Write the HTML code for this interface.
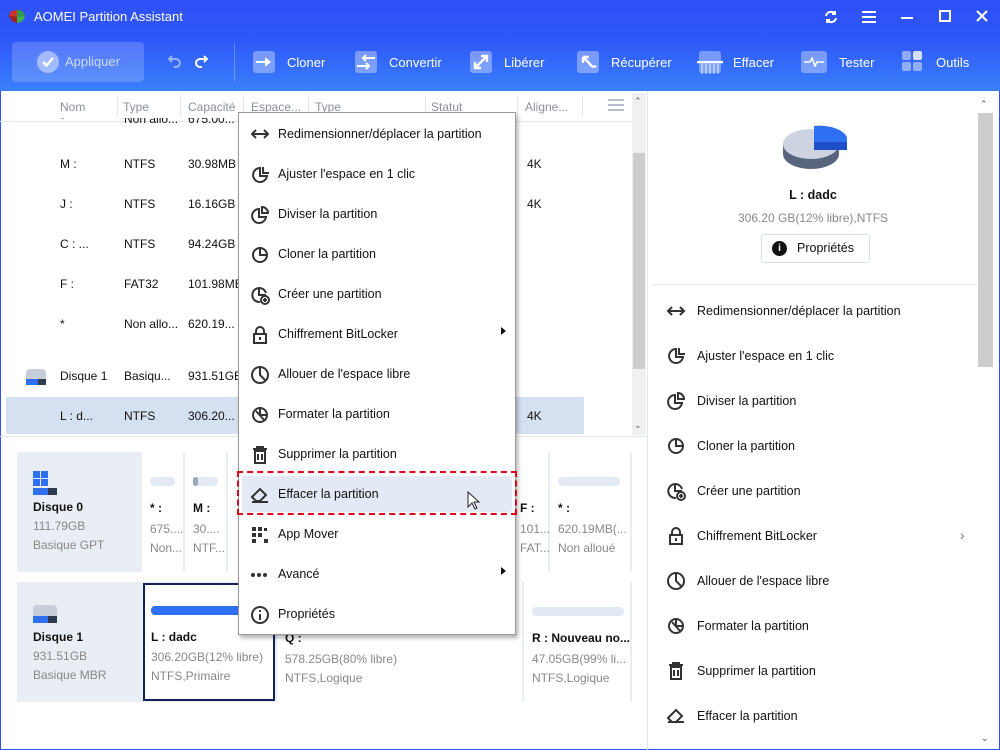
<!DOCTYPE html>
<html><head><meta charset="utf-8"><style>
*{box-sizing:border-box;margin:0;padding:0}
body{width:1000px;height:750px;overflow:hidden;font-family:"Liberation Sans","DejaVu Sans",sans-serif;font-size:12px;color:#111;background:#fff;position:relative}
.abs{position:absolute}
#top{left:0;top:0;width:1000px;height:91px;background:linear-gradient(#2d50f7 0%,#2f58f8 45%,#3a80fb 100%)}
.tb{position:absolute;top:48px;height:28px;color:#fff;font-size:13px;display:flex;align-items:center}
.tb .ic{width:22px;height:22px;border-radius:3px;background:rgba(255,255,255,.35);margin-right:12px;position:relative}
.hdr{position:absolute;top:100px;color:#8a8f99;font-size:12px}
.vs{position:absolute;top:95px;width:1px;height:22px;background:#e2e6ee}
.row{position:absolute;left:0;width:590px;height:20px;font-size:12px}
.row span{position:absolute}
.menu{left:238px;top:112px;width:278px;height:523px;background:#fff;border:1px solid #9a9a9a;box-shadow:2px 3px 4px rgba(0,0,0,.3)}
.mi{position:absolute;left:0;width:276px;height:40px;font-size:12.5px}
.mi svg{position:absolute;left:11px;top:11px}
.mi span{position:absolute;left:39px;top:13px}
.ri{position:absolute;left:660px;font-size:12.5px;width:320px;height:30px}
.ri svg{position:absolute;left:6px;top:5px}
.ri span{position:absolute;left:37px;top:8px}
.card{position:absolute;left:17px;width:615px;background:#e9edf4}
.pc{position:absolute;top:0;background:#fff;font-size:12px}
.pc .bar{position:absolute;left:8px;top:25px;height:9px;border-radius:4px;background:#e3e9f3}
.pc b{position:absolute;left:8px;top:49px;font-size:12px}
.pc .l1{position:absolute;left:8px;top:70px;color:#888}
.pc .l2{position:absolute;left:8px;top:89px;color:#888}
.gray{color:#888}
</style></head><body>
<div id="top" class="abs">
 <svg class="abs" style="left:8px;top:8px" width="18" height="16"><path d="M1 8 Q2 2 9 2 L9 9 Z" fill="#d2312c"/><path d="M9 2 Q16 2 17 8 L9 9Z" fill="#2f9a4a"/><path d="M1 8 L9 9 L9 15 Q3 14 1 8Z" fill="#a02020"/><path d="M9 9 L17 8 Q16 14 9 15Z" fill="#3bb04f"/></svg>
 <div class="abs" style="left:34px;top:9px;color:#fff;font-size:13px">AOMEI Partition Assistant</div>
 <svg class="abs" style="left:823px;top:9px" width="16" height="16" fill="none" stroke="#fff" stroke-width="2"><path d="M3 7a5 5 0 0 1 9-2M13 9a5 5 0 0 1-9 2"/><path d="M12 2v3h-3M4 14v-3h3"/></svg>
 <svg class="abs" style="left:862px;top:11px" width="14" height="12" stroke="#fff" stroke-width="2"><path d="M0 1h14M0 6h14M0 11h14"/></svg>
 <div class="abs" style="left:901px;top:17px;width:12px;height:2px;background:#fff"></div>
 <div class="abs" style="left:939px;top:10px;width:12px;height:12px;border:2px solid #fff"></div>
 <svg class="abs" style="left:976px;top:10px" width="12" height="12" stroke="#fff" stroke-width="2"><path d="M1 1L11 11M11 1L1 11"/></svg>
 <div class="abs" style="left:12px;top:42px;width:132px;height:40px;border-radius:4px;background:rgba(255,255,255,.18)"></div>
 <div class="abs" style="left:37px;top:51px;width:22px;height:22px;border-radius:11px;background:rgba(255,255,255,.45)"></div>
 <svg class="abs" style="left:41px;top:55px" width="14" height="14" fill="none" stroke="#fff" stroke-width="2.4"><path d="M2 7l3.5 3.5L12 3"/></svg>
 <div class="abs" style="left:65px;top:54px;color:rgba(255,255,255,.7);font-size:13px">Appliquer</div>
 <svg class="abs" style="left:168px;top:54px" width="40" height="14" fill="none" stroke-width="2"><path d="M4 2L1 5l3 3M1 5h7a4 4 0 0 1 0 8H6" stroke="rgba(255,255,255,.5)"/><path d="M36 2l3 3-3 3M39 5h-7a4 4 0 0 0 0 8h2" stroke="#fff"/></svg>
 <div class="abs" style="left:234px;top:42px;width:1px;height:40px;background:rgba(255,255,255,.25)"></div>
 <div class="tb" style="left:253px"><div class="ic"><svg class="abs" style="left:3px;top:5px" width="16" height="12" fill="#fff"><path d="M0 5h9V1l6 5-6 5V7H0z"/></svg></div>Cloner</div>
 <div class="tb" style="left:355px"><div class="ic"><svg class="abs" style="left:2px;top:2px" width="18" height="18" fill="none" stroke="#fff" stroke-width="2"><path d="M18 5H6M9 2L6 5l3 3M0 13h12M9 10l3 3-3 3"/></svg></div>Convertir</div>
 <div class="tb" style="left:470px"><div class="ic"><svg class="abs" style="left:2px;top:2px" width="18" height="18" fill="none" stroke="#fff" stroke-width="2.4"><path d="M3 15L15 3M9 3h6v6M3 9v6h6"/></svg></div>Libérer</div>
 <div class="tb" style="left:577px"><div class="ic"><svg class="abs" style="left:3px;top:3px" width="17" height="17" fill="none" stroke="#fff" stroke-width="2.4"><path d="M3 3l7 7a4 4 0 0 0 6 2M3 3v6M3 3h6"/></svg></div>Récupérer</div>
 <div class="tb" style="left:699px"><div class="ic"><svg class="abs" style="left:-2px;top:10px" width="26" height="14" stroke="#fff" stroke-width="1.4"><path d="M0 1h26" stroke-width="2.4"/><path d="M5 3v10M9 3v10M13 3v10M17 3v10M21 3v10" stroke="rgba(255,255,255,.6)"/></svg></div>Effacer</div>
 <div class="tb" style="left:801px"><div class="ic" style="width:26px"><svg class="abs" style="left:3px;top:6px" width="20" height="10" fill="none" stroke="#fff" stroke-width="1.6"><path d="M0 5h6l2-4 3 8 2-4h7"/></svg></div>Tester</div>
 <div class="tb" style="left:902px"><div class="ic" style="background:none"><div class="abs" style="left:0;top:0;width:9px;height:9px;border-radius:2px;background:rgba(255,255,255,.45)"></div><div class="abs" style="left:11px;top:0;width:9px;height:9px;border-radius:2px;background:rgba(255,255,255,.8)"></div><div class="abs" style="left:0;top:11px;width:9px;height:9px;border-radius:2px;background:rgba(255,255,255,.45)"></div><div class="abs" style="left:11px;top:11px;width:9px;height:9px;border-radius:2px;background:rgba(255,255,255,.45)"></div></div>Outils</div>
</div>
<div class="abs" style="left:0;top:91px;width:1px;height:659px;background:#2d50f7"></div>
<div class="abs" style="left:999px;top:91px;width:1px;height:659px;background:#2d50f7"></div>
<div class="abs" style="left:0;top:749px;width:1000px;height:1px;background:#2d50f7"></div>
<div class="hdr" style="left:60px">Nom</div><div class="vs" style="left:117px"></div>
<div class="hdr" style="left:123px">Type</div><div class="vs" style="left:180px"></div>
<div class="hdr" style="left:188px">Capacité</div><div class="vs" style="left:243px"></div>
<div class="hdr" style="left:251px">Espace...</div><div class="vs" style="left:308px"></div>
<div class="hdr" style="left:315px">Type</div><div class="vs" style="left:425px"></div>
<div class="hdr" style="left:431px">Statut</div><div class="vs" style="left:517px"></div>
<div class="hdr" style="left:525px">Aligne...</div><div class="vs" style="left:582px"></div>
<svg class="abs" style="left:608px;top:99px" width="16" height="12" fill="#b8bfcc"><rect width="16" height="2"/><rect y="5" width="16" height="2"/><rect y="10" width="16" height="2"/></svg>
<div class="abs" style="left:0;top:121px;width:632px;height:1px;background:#e2e6ee"></div>
<div class="abs" style="left:632px;top:93px;width:14px;height:342px;background:#f0f0f0"></div>
<div class="abs" style="left:633px;top:153px;width:12px;height:216px;background:#cdcdcd"></div>
<div class="abs" style="left:634px;top:96px;font-size:9px;color:#555">⌃</div>
<div class="abs" style="left:634px;top:420px;font-size:9px;color:#555">⌄</div>
<div class="row" style="top:118px;height:10px;overflow:hidden"><span style="left:60px;top:-6px">*</span><span style="left:124px;top:-6px">Non allo...</span><span style="left:188px;top:-6px">675.00...</span></div>
<div class="row" style="top:157px"><span style="left:60px">M :</span><span style="left:124px">NTFS</span><span style="left:188px">30.98MB</span><span style="left:527px">4K</span></div>
<div class="row" style="top:197px"><span style="left:60px">J :</span><span style="left:124px">NTFS</span><span style="left:188px">16.16GB</span><span style="left:527px">4K</span></div>
<div class="row" style="top:237px"><span style="left:60px">C : ...</span><span style="left:124px">NTFS</span><span style="left:188px">94.24GB</span></div>
<div class="row" style="top:277px"><span style="left:60px">F :</span><span style="left:124px">FAT32</span><span style="left:188px">101.98MB</span></div>
<div class="row" style="top:317px"><span style="left:60px">*</span><span style="left:124px">Non allo...</span><span style="left:188px">620.19...</span></div>
<div class="abs" style="left:26px;top:369px;width:20px;height:10px;border-radius:4px 4px 0 0;background:#c7ced9"></div>
<div class="abs" style="left:26px;top:379px;width:20px;height:6px;background:#2f3b4f"></div><div class="abs" style="left:26px;top:379px;width:12px;height:6px;background:#2f6ff2"></div>
<div class="row" style="top:369px"><span style="left:60px">Disque 1</span><span style="left:124px">Basiqu...</span><span style="left:188px">931.51GB</span></div>
<div class="abs" style="left:6px;top:397px;width:578px;height:37px;background:#d5e0f0"></div>
<div class="row" style="top:409px"><span style="left:60px">L : d...</span><span style="left:124px">NTFS</span><span style="left:188px">306.20...</span><span style="left:527px">4K</span></div>
<div class="abs" style="left:0;top:436px;width:648px;height:1px;background:#e2e6ee"></div>
<div class="abs" style="left:647px;top:91px;width:1px;height:659px;background:#e2e6ee"></div>
<div class="card" style="top:452px;height:120px">
 <div class="abs" style="left:16px;top:19px;width:7px;height:7px;background:#2f6ff2"></div><div class="abs" style="left:24px;top:19px;width:7px;height:7px;background:#2f6ff2"></div><div class="abs" style="left:16px;top:27px;width:7px;height:7px;background:#2f6ff2"></div><div class="abs" style="left:24px;top:27px;width:7px;height:7px;background:#2f6ff2"></div>
 <div class="abs" style="left:16px;top:36px;width:24px;height:7px;background:#2f3b4f"></div><div class="abs" style="left:16px;top:36px;width:15px;height:7px;background:#2f6ff2"></div>
 <b class="abs" style="left:16px;top:48px">Disque 0</b><div class="abs gray" style="left:16px;top:67px">111.79GB</div><div class="abs gray" style="left:16px;top:86px">Basique GPT</div>
 <div class="pc" style="left:125px;width:41px;height:120px"><div class="bar" style="width:25px"></div><b>* :</b><div class="l1">675....</div><div class="l2">Non...</div></div>
 <div class="pc" style="left:168px;width:41px;height:120px"><div class="bar" style="width:25px"><div style="width:5px;height:9px;border-radius:4px;background:#9aa8c0"></div></div><b>M :</b><div class="l1">30....</div><div class="l2">NTF...</div></div>
 <div class="pc" style="left:211px;width:290px;height:120px"></div>
 <div class="pc" style="left:495px;width:36px;height:120px"><b>F :</b><div class="l1">101....</div><div class="l2">FAT...</div></div>
 <div class="pc" style="left:533px;width:80px;height:120px"><div class="bar" style="width:62px"></div><b>* :</b><div class="l1">620.19MB(...</div><div class="l2">Non alloué</div></div>
</div>
<div class="card" style="top:582px;height:120px">
 <div class="abs" style="left:16px;top:23px;width:24px;height:11px;border-radius:4px 4px 0 0;background:#c7ced9"></div>
 <div class="abs" style="left:16px;top:34px;width:24px;height:7px;background:#2f3b4f"></div><div class="abs" style="left:16px;top:34px;width:15px;height:7px;background:#2f6ff2"></div>
 <b class="abs" style="left:16px;top:48px">Disque 1</b><div class="abs gray" style="left:16px;top:67px">931.51GB</div><div class="abs gray" style="left:16px;top:86px">Basique MBR</div>
 <div class="pc" style="left:126px;width:132px;height:118px;top:1px;border:2px solid #14225a"><div class="bar" style="left:6px;top:21px;width:130px;background:#2f6ff2"></div><b style="left:6px;top:45px">L : dadc</b><div class="l1" style="left:6px;top:65px">306.20GB(12% libre)</div><div class="l2" style="left:6px;top:84px">NTFS,Primaire</div></div>
 <div class="pc" style="left:260px;width:245px;height:120px"><b>Q :</b><div class="l1">578.25GB(80% libre)</div><div class="l2">NTFS,Logique</div></div>
 <div class="pc" style="left:507px;width:106px;height:120px"><div class="bar" style="width:92px"></div><b>R : Nouveau no...</b><div class="l1">47.05GB(99% li...</div><div class="l2">NTFS,Logique</div></div>
</div>
<svg class="abs" style="left:783px;top:125px" width="64" height="48"><ellipse cx="28" cy="29" rx="28" ry="15" fill="#59657d"/><rect x="0" y="19" width="56" height="10" fill="#59657d"/><ellipse cx="28" cy="19" rx="28" ry="15" fill="#cdd3e0"/><path d="M31 1 A28 15 0 0 1 64 19 L31 19Z" fill="#2f6ff2"/><rect x="31" y="17" width="33" height="8" fill="#1e4fc8"/></svg>
<div class="abs" style="left:648px;width:330px;text-align:center;top:188px;font-weight:bold;font-size:12.5px">L : dadc</div>
<div class="abs gray" style="left:738px;top:211px;font-size:12px">306.20 GB(12% libre),NTFS</div>
<div class="abs" style="left:761px;top:234px;width:109px;height:29px;border:1px solid #d9dee8;border-radius:3px"></div>
<div class="abs" style="left:772px;top:241px;width:15px;height:15px;border-radius:8px;background:#111;color:#fff;font-size:10px;font-weight:bold;text-align:center;line-height:15px">i</div>
<div class="abs" style="left:797px;top:241px;font-size:12.5px">Propriétés</div>
<div class="abs" style="left:653px;top:284px;width:324px;height:1px;background:#dde3ee"></div>
<div class="abs" style="left:978px;top:96px;width:20px;height:558px;background:#fff"></div>
<div class="abs" style="left:978px;top:113px;width:15px;height:254px;background:#cdcdcd"></div>
<div class="abs" style="left:980px;top:99px;font-size:9px;color:#555">⌃</div>
<div class="abs" style="left:981px;top:733px;font-size:9px;color:#555">⌄</div>
<div class="ri" style="top:296px"><svg width="20" height="20" fill="none" stroke="#333" stroke-width="2"><path d="M3 10h14M6 6l-4 4 4 4M14 6l4 4-4 4"/></svg><span>Redimensionner/déplacer la partition</span></div>
<div class="ri" style="top:341px"><svg width="20" height="20" fill="none" stroke="#333" stroke-width="2"><path d="M10 3a7 7 0 1 0 7 8H10z"/><path d="M13 2v6h6"/></svg><span>Ajuster l'espace en 1 clic</span></div>
<div class="ri" style="top:386px"><svg width="20" height="20" fill="none" stroke="#333" stroke-width="2"><path d="M9 4a7 7 0 1 0 7 8H9z"/><path d="M12 2a6 6 0 0 1 6 6h-6z"/></svg><span>Diviser la partition</span></div>
<div class="ri" style="top:431px"><svg width="20" height="20" fill="none" stroke="#333" stroke-width="2"><circle cx="10" cy="10" r="7"/><path d="M10 3v7h7"/></svg><span>Cloner la partition</span></div>
<div class="ri" style="top:476px"><svg width="20" height="20" fill="none" stroke="#333" stroke-width="2"><path d="M16 8a7 7 0 1 0-6 9"/><path d="M9 3v7h7"/><circle cx="15" cy="15" r="4"/><path d="M15 13v4M13 15h4"/></svg><span>Créer une partition</span></div>
<div class="ri" style="top:521px"><svg width="20" height="20" fill="none" stroke="#333" stroke-width="2"><rect x="4" y="9" width="12" height="9"/><path d="M6 9V6a4 4 0 0 1 8 0v3M10 12v3"/></svg><span>Chiffrement BitLocker</span></div>
<div class="abs" style="left:960px;top:527px;color:#777;font-size:14px">›</div>
<div class="ri" style="top:566px"><svg width="20" height="20" fill="none" stroke="#333" stroke-width="2"><circle cx="10" cy="10" r="8"/><path d="M10 2v8l5 5"/></svg><span>Allouer de l'espace libre</span></div>
<div class="ri" style="top:611px"><svg width="20" height="20" fill="none" stroke="#333" stroke-width="2"><circle cx="10" cy="10" r="7"/><path d="M10 3v7h7M6 6l9 10"/></svg><span>Formater la partition</span></div>
<div class="ri" style="top:656px"><svg width="20" height="20" fill="none" stroke="#333" stroke-width="2"><path d="M3 4h14M7 4V2h6v2M5 6h10v12H5zM8 9v6M12 9v6"/></svg><span>Supprimer la partition</span></div>
<div class="ri" style="top:701px"><svg width="20" height="20" fill="none" stroke="#333" stroke-width="2"><path d="M2 12l8-8 6 6-6 6H6zM2 16h16"/></svg><span>Effacer la partition</span></div>
<div class="menu abs">
 <div class="mi" style="top:1px"><svg width="20" height="18" fill="none" stroke="#333" stroke-width="2"><path d="M3 9h14M6 5l-4 4 4 4M14 5l4 4-4 4"/></svg><span>Redimensionner/déplacer la partition</span></div>
 <div class="mi" style="top:41px"><svg width="20" height="20" fill="none" stroke="#333" stroke-width="2"><path d="M10 3a7 7 0 1 0 7 8H10z"/><path d="M13 2v6h6"/></svg><span>Ajuster l'espace en 1 clic</span></div>
 <div class="mi" style="top:81px"><svg width="20" height="20" fill="none" stroke="#333" stroke-width="2"><path d="M9 4a7 7 0 1 0 7 8H9z"/><path d="M12 2a6 6 0 0 1 6 6h-6z"/></svg><span>Diviser la partition</span></div>
 <div class="mi" style="top:121px"><svg width="20" height="20" fill="none" stroke="#333" stroke-width="2"><circle cx="10" cy="10" r="7"/><path d="M10 3v7h7"/></svg><span>Cloner la partition</span></div>
 <div class="mi" style="top:161px"><svg width="20" height="20" fill="none" stroke="#333" stroke-width="2"><path d="M16 8a7 7 0 1 0-6 9"/><path d="M9 3v7h7"/><circle cx="15" cy="15" r="4"/><path d="M15 13v4M13 15h4"/></svg><span>Créer une partition</span></div>
 <div class="mi" style="top:201px"><svg width="20" height="20" fill="none" stroke="#333" stroke-width="2"><rect x="4" y="9" width="12" height="9"/><path d="M6 9V6a4 4 0 0 1 8 0v3M10 12v3"/></svg><span>Chiffrement BitLocker</span><div class="abs" style="left:262px;top:13px;border-left:5px solid #111;border-top:4px solid transparent;border-bottom:4px solid transparent"></div></div>
 <div class="mi" style="top:241px"><svg width="20" height="20" fill="none" stroke="#333" stroke-width="2"><circle cx="10" cy="10" r="8"/><path d="M10 2v8l5 5"/></svg><span>Allouer de l'espace libre</span></div>
 <div class="mi" style="top:281px"><svg width="20" height="20" fill="none" stroke="#333" stroke-width="2"><circle cx="10" cy="10" r="7"/><path d="M10 3v7h7M6 6l9 10"/></svg><span>Formater la partition</span></div>
 <div class="mi" style="top:321px"><svg width="20" height="20" fill="none" stroke="#333" stroke-width="2"><path d="M3 4h14M7 4V2h6v2M5 6h10v12H5zM8 9v6M12 9v6"/></svg><span>Supprimer la partition</span></div>
 <div class="abs" style="left:3px;top:363px;width:270px;height:36px;background:#e3eaf5;border-radius:3px"></div>
 <div class="abs" style="left:-2px;top:358px;width:280px;height:44px;border:2.5px dashed #e0001b"></div>
 <div class="mi" style="top:361px"><svg width="20" height="20" fill="none" stroke="#333" stroke-width="2"><path d="M2 12l8-8 6 6-6 6H6zM2 17h16"/></svg><span>Effacer la partition</span>
  <svg class="abs" style="left:228px;top:17px" width="14" height="20"><path d="M1 1v15l4-4 3 6 2-1-3-6h5z" fill="#fff" stroke="#222" stroke-width="1"/></svg></div>
 <div class="mi" style="top:401px"><svg width="20" height="20" fill="#333"><rect x="2" y="2" width="4" height="4"/><rect x="8" y="2" width="4" height="4"/><rect x="2" y="8" width="4" height="4"/><rect x="8" y="8" width="4" height="4"/><rect x="2" y="14" width="4" height="4"/><rect x="14" y="14" width="4" height="4"/><rect x="14" y="3" width="3" height="3"/></svg><span>App Mover</span></div>
 <div class="mi" style="top:441px"><svg width="20" height="20" fill="#333"><circle cx="3" cy="10" r="2"/><circle cx="9" cy="10" r="2"/><circle cx="15" cy="10" r="2"/></svg><span>Avancé</span><div class="abs" style="left:262px;top:13px;border-left:5px solid #111;border-top:4px solid transparent;border-bottom:4px solid transparent"></div></div>
 <div class="mi" style="top:481px"><svg width="20" height="20" fill="none" stroke="#333" stroke-width="2"><circle cx="10" cy="10" r="8"/><path d="M10 9v6M10 5v2"/></svg><span>Propriétés</span></div>
</div>
</body></html>
